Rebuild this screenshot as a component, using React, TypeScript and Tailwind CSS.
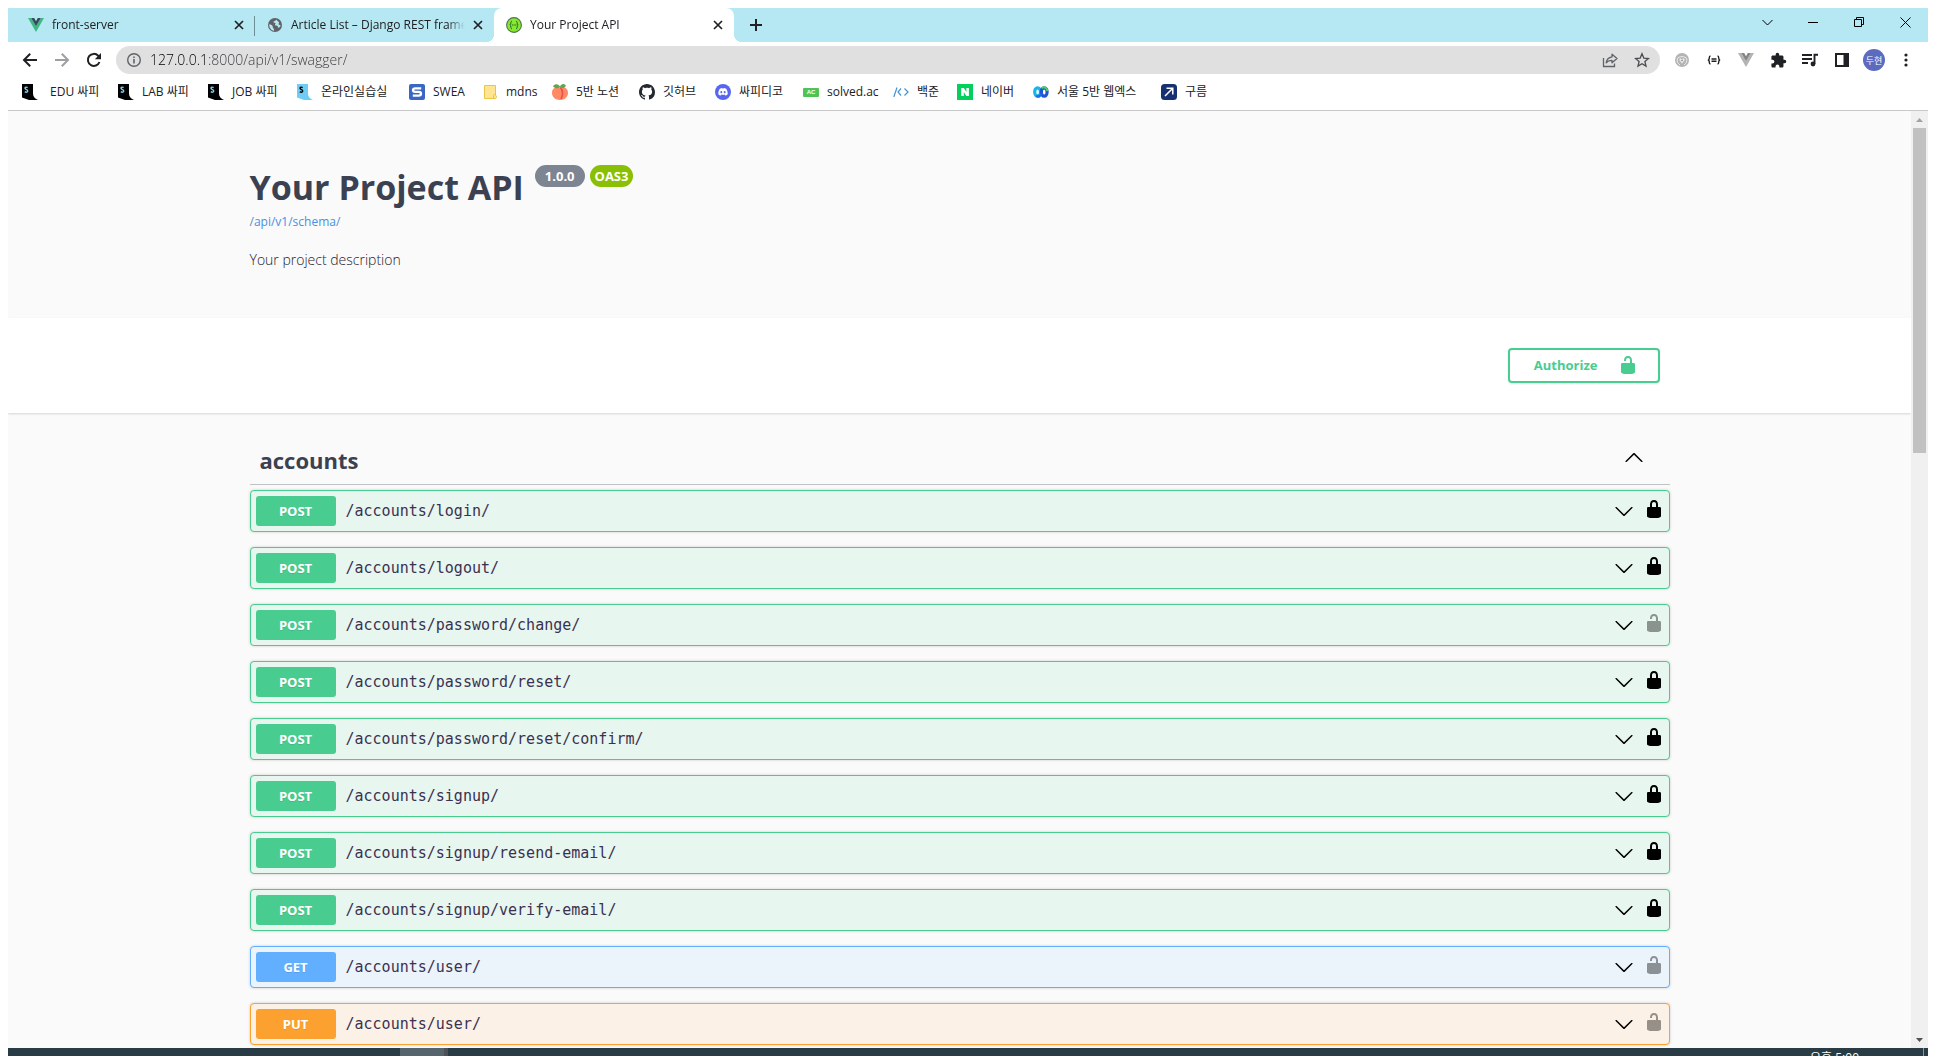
import type { ReactNode } from "react";

const uiFont = "font-['Open_Sans','Noto_Sans_CJK_KR',sans-serif]";

const LOCKED =
  "M15.8 8H14V5.6C14 2.703 12.665 1 10 1 7.334 1 6 2.703 6 5.6V8H4c-.553 0-1 .646-1 1.199V17c0 .549.428 1.139.951 1.307l1.197.387C5.672 18.861 6.55 19 7.1 19h5.8c.549 0 1.428-.139 1.951-.307l1.196-.387c.524-.167.953-.757.953-1.306V9.199C17 8.646 16.352 8 15.8 8zM12 8H8V5.199C8 3.754 8.797 3 10 3c1.203 0 2 .754 2 2.199V8z";
const UNLOCKED =
  "M15.8 8H14V5.6C14 2.703 12.665 1 10 1 7.334 1 6 2.703 6 5.6V6h2v-.801C8 3.754 8.797 3 10 3c1.203 0 2 .754 2 2.199V8H4c-.553 0-1 .646-1 1.199V17c0 .549.428 1.139.951 1.307l1.197.387C5.672 18.861 6.55 19 7.1 19h5.8c.549 0 1.428-.139 1.951-.307l1.196-.387c.524-.167.953-.757.953-1.306V9.199C17 8.646 16.352 8 15.8 8z";

function LockIcon({ locked, className = "" }: { locked: boolean; className?: string }) {
  return (
    <svg viewBox="0 0 20 20" className={`size-5 shrink-0 fill-current ${className}`} aria-hidden="true">
      <path d={locked ? LOCKED : UNLOCKED} />
    </svg>
  );
}

function Chevron({ up = false }: { up?: boolean }) {
  return (
    <svg viewBox="0 0 20 20" className={`size-5 shrink-0 ${up ? "-mt-1 rotate-180" : ""}`} aria-hidden="true">
      <path d="M17.418 6.109c.272-.268.709-.268.979 0s.271.701 0 .969l-7.908 7.83c-.27.268-.707.268-.979 0l-7.908-7.83c-.27-.268-.27-.701 0-.969.271-.268.709-.268.979 0L10 13.25l7.418-7.141z" />
    </svg>
  );
}

function Svg({ children, size = 16, box = 16 }: { children: ReactNode; size?: number; box?: number }) {
  return (
    <svg width={size} height={size} viewBox={`0 0 ${box} ${box}`} className="shrink-0" aria-hidden="true">
      {children}
    </svg>
  );
}

/* ---------- favicons ---------- */

const VueIcon = () => (
  <Svg>
    <path d="M0 1h3.2L8 9.3 12.800 1H16L8 15z" fill="#41b883" />
    <path d="M3.200 1H6.200L8 4.200 9.800 1h3L8 9.300z" fill="#35495e" />
  </Svg>
);

const GlobeIcon = () => (
  <Svg>
    <circle cx="8" cy="8" r="7" fill="#5f6368" />
    <path d="M2.300 7.200c1.600.3 3 1 3.400 2 .3 1-.3 1.300.6 2 .7.500.9 1.200.7 2.500C4 13.300 2 10.500 2.300 7.200zM9.500 2.500c-.4 1.200-1.700 1.200-2.600 1.700-.8.500-.3 1.500.6 1.500 1.100.1 1.300 1 .7 1.600-.6.800 0 1.400 1.200 1.300 1.400 0 1.700 1 1.500 2 1.700.3 2.400-1.200 2.700-2.600-.9.300-1.900-.1-2-1-.1-.8.900-1.200.2-2-.6-.7-1.700-1-2.300-2.500z" fill="#b6e8f3" />
  </Svg>
);

const SwaggerIcon = () => (
  <Svg>
    <circle cx="8" cy="8" r="7.400" fill="#85ea2d" stroke="#4d7350" strokeWidth="1.100" />
    <path d="M6 4.300C4.900 4.300 4.900 4.900 4.900 5.800S4.600 7.700 3.800 8c.8.300 1.100 1.200 1.100 2.200S4.900 11.700 6 11.700M10 4.300c1.100 0 1.100.6 1.100 1.500s.3 1.900 1.100 2.200c-.8.300-1.100 1.200-1.100 2.200s0 1.500-1.100 1.500" fill="none" stroke="#2c5a3c" strokeWidth="1" />
    <path d="M5.800 8h4.800" stroke="#2c5a3c" strokeWidth="1.200" strokeDasharray="1.200 .5" />
  </Svg>
);

function SsafyIcon({ fill, ink }: { fill: string; ink: string }) {
  return (
    <Svg>
      <path d="M0 0h11v9.500c0 3 1.500 5 5 6.500H7L0 13.500z" fill={fill} />
      <path d="M5.600 3.600C4.500 2.800 3 3.100 3 4.300c0 1.600 2.700 1 2.700 2.700 0 1.300-1.700 1.500-2.900.7" fill="none" stroke={ink} strokeWidth="1.400" />
    </Svg>
  );
}

const SweaIcon = () => (
  <Svg>
    <rect width="16" height="16" rx="2" fill="#3a66c4" />
    <path d="M12.200 4.300H6.300C4.700 4.300 4 5 4 6.100s.7 1.800 2.100 1.800h3.800c1.400 0 2.100.7 2.100 1.900s-.7 1.900-2.300 1.900H3.800" fill="none" stroke="#fff" strokeWidth="2.300" />
  </Svg>
);

const FolderIcon = () => (
  <Svg>
    <path d="M2.500 1.500h11v9.500a2 2 0 0 1 0 3.500h-11z" fill="#ffe591" stroke="#e8c547" />
    <path d="M11.500 14v-2.500a1 1 0 0 1 2 0" fill="none" stroke="#e8c547" />
  </Svg>
);

const PeachIcon = () => (
  <Svg>
    <path d="M8 3.500C3.500 2 0 5 0 9c0 4.200 3.600 7 8 7s8-2.800 8-7c0-4-3.500-7-8-5.500z" fill="#ff8a65" />
    <path d="M8.300 3.500c2.600 2.600 3 7.500.7 11.500" fill="none" stroke="#e8504a" strokeWidth="1.600" />
    <path d="M1 2.200C3.200-.5 6-.4 8 2.600 9.200-.2 12-.8 14 1.700 12.300 4.800 9.500 4.500 8 3.100 6 4.900 3 4.700 1 2.200z" fill="#5fa552" />
  </Svg>
);

const GithubIcon = () => (
  <Svg>
    <path fill="#24292f" d="M8 0C3.580 0 0 3.580 0 8c0 3.540 2.290 6.530 5.470 7.590.4.070.55-.17.55-.38 0-.19-.01-.82-.01-1.490-2.010.37-2.530-.49-2.690-.94-.09-.23-.48-.94-.82-1.130-.28-.15-.68-.52-.01-.53.63-.01 1.080.58 1.230.82.72 1.210 1.870.87 2.330.66.07-.52.28-.87.51-1.070-1.780-.2-3.640-.89-3.640-3.950 0-.87.31-1.590.82-2.150-.08-.2-.36-1.020.08-2.120 0 0 .67-.21 2.200.82.64-.18 1.320-.27 2-.27s1.360.09 2 .27c1.530-1.040 2.200-.82 2.200-.82.44 1.100.16 1.920.08 2.120.51.56.82 1.270.82 2.150 0 3.070-1.870 3.750-3.650 3.950.29.25.54.73.54 1.480 0 1.070-.01 1.930-.01 2.200 0 .21.15.46.55.38A8.010 8.010 0 0 0 16 8c0-4.420-3.580-8-8-8z" />
  </Svg>
);

const DiscordIcon = () => (
  <Svg>
    <circle cx="8" cy="8" r="8" fill="#5865f2" />
    <path d="M4.800 4.700c1-.6 1.900-.8 2.300-.8l.3.500h1.200l.3-.5c.4 0 1.300.2 2.300.8 1 1.500 1.700 3.500 1.500 5.500-.8.800-1.700 1.200-2.500 1.300l-.6-1c-1 .3-2.200.3-3.200 0l-.6 1c-.8-.1-1.700-.5-2.500-1.300-.2-2 .5-4 1.500-5.500z" fill="#fff" />
    <ellipse cx="6.300" cy="8.200" rx="1" ry="1.100" fill="#5865f2" />
    <ellipse cx="9.700" cy="8.200" rx="1" ry="1.100" fill="#5865f2" />
  </Svg>
);

const SolvedIcon = () => (
  <span className="flex h-[9px] w-4 shrink-0 items-center justify-center rounded-[1px] bg-[#4fc455] font-['Liberation_Sans',sans-serif] text-[6px] leading-none font-bold text-white">
    AC
  </span>
);

const BaekjoonIcon = () => (
  <Svg>
    <path d="M4 3.500.8 13M8 4.500 5 8l3 3.500M11.500 4.500 15 8l-3.500 3.500" fill="none" stroke="#4593d1" strokeWidth="1.200" />
  </Svg>
);

const NaverIcon = () => (
  <Svg>
    <rect width="16" height="16" fill="#03cf5d" />
    <path d="M4.200 12V4h2.700l2.500 3.900V4h2.500v8H9.300L6.800 8.100V12z" fill="#fff" />
  </Svg>
);

const WebexIcon = () => (
  <Svg>
    <ellipse cx="4.600" cy="8" rx="2.900" ry="4.200" fill="none" stroke="#17b5e8" strokeWidth="3.200" />
    <ellipse cx="11.200" cy="8" rx="2.900" ry="4.200" fill="none" stroke="#1f55d6" strokeWidth="3.200" />
    <path d="M8.500 4.300c1.300-1.200 3-1.300 4.300-.2.900.8 1.500 1.800 1.600 3" fill="none" stroke="#4fd05a" strokeWidth="2" />
    <path d="M3.400 11.600c1.900 1.600 3.900 1 4.700-2.100" fill="none" stroke="#1c6fe8" strokeWidth="2.600" />
  </Svg>
);

const GoormIcon = () => (
  <Svg>
    <rect width="16" height="16" rx="3.500" fill="#16316f" />
    <path d="M4 12l7.500-7.500M5.500 4.200h6.300v6.300" fill="none" stroke="#fff" strokeWidth="1.500" />
  </Svg>
);

/* ---------- browser chrome ---------- */

const Cross = () => (
  <Svg size={10} box={10}>
    <path d="M1 1l8 8M9 1L1 9" stroke="#202124" strokeWidth="1.700" fill="none" />
  </Svg>
);

function Tab({ icon, title, active = false, divider = false }: { icon: ReactNode; title: string; active?: boolean; divider?: boolean }) {
  return (
    <div
      className={`relative flex min-w-0 items-center gap-2 pr-[11px] pl-3 ${
        active
          ? "w-60 rounded-t-lg bg-white before:absolute before:bottom-0 before:-left-2 before:size-2 before:bg-[radial-gradient(circle_at_0_0,transparent_8px,white_8px)] after:absolute after:-right-2 after:bottom-0 after:size-2 after:bg-[radial-gradient(circle_at_100%_0,transparent_8px,white_8px)]"
          : "w-[239px]"
      }`}
    >
      {icon}
      <button className="min-w-0 flex-1 overflow-hidden mask-r-from-90% text-left text-xs whitespace-nowrap">{title}</button>
      <button aria-label={`Close ${title}`}>
        <Cross />
      </button>
      {divider && <span className="absolute top-2 right-0 h-5 w-px bg-[#6f8d94]" />}
    </div>
  );
}

function WindowButton({ label, children }: { label: string; children: ReactNode }) {
  return (
    <button aria-label={label} className="flex h-7 w-[46px] items-center justify-center">
      <svg width="11" height="11" viewBox="0 0 11 11" fill="none" stroke="#000" aria-hidden="true">
        {children}
      </svg>
    </button>
  );
}

function TabStrip() {
  return (
    <div className="flex h-[34px] shrink-0 bg-[#b5e8f3]">
      <div className="flex min-w-0 flex-1 pl-2">
        <Tab icon={<VueIcon />} title="front-server" divider />
        <Tab icon={<GlobeIcon />} title="Article List – Django REST framework" />
        <Tab icon={<SwaggerIcon />} title="Your Project API" active />
        <button aria-label="New tab" className="ml-4 self-center">
          <Svg size={12} box={12}>
            <path d="M6 0v12M0 6h12" stroke="#202124" strokeWidth="2" />
          </Svg>
        </button>
      </div>
      <div className="flex">
        <WindowButton label="Search tabs">
          <path d="M.5 3l5 5 5-5" />
        </WindowButton>
        <WindowButton label="Minimize">
          <path d="M0 5.500h10" />
        </WindowButton>
        <WindowButton label="Restore">
          <path d="M.5 2.500h7v7h-7zM2.500 2.500v-2h7v7h-2" />
        </WindowButton>
        <WindowButton label="Close window">
          <path d="M.5.5l10 10M10.500.5l-10 10" />
        </WindowButton>
      </div>
    </div>
  );
}

function ToolButton({ label, children }: { label: string; children: ReactNode }) {
  return (
    <button aria-label={label} className="flex h-7 w-8 shrink-0 items-center justify-center">
      {children}
    </button>
  );
}

function Toolbar() {
  return (
    <div className="flex h-9 shrink-0 items-center px-1.5 text-[#202124]">
      <ToolButton label="Back">
        <Svg>
          <path d="M15 8H2.500M8.200 1.700 2 8l6.200 6.300" fill="none" stroke="#202124" strokeWidth="2" />
        </Svg>
      </ToolButton>
      <ToolButton label="Forward">
        <Svg>
          <path d="M1 8h12.500M7.800 1.700 14 8l-6.200 6.300" fill="none" stroke="#9d9fa2" strokeWidth="2" />
        </Svg>
      </ToolButton>
      <ToolButton label="Reload">
        <Svg>
          <path d="M13.500 10A6 6 0 1 1 12.200 3.700L13.500 5" fill="none" stroke="#202124" strokeWidth="2" />
          <path d="M15 1v6.200H8.800z" fill="#202124" />
        </Svg>
      </ToolButton>
      <div className="mx-1.5 flex h-7 min-w-0 flex-1 items-center rounded-full bg-[#e0e0e0] pr-0.5 pl-2.5">
        <Svg>
          <circle cx="8" cy="8" r="6.300" fill="none" stroke="#5f6368" strokeWidth="1.400" />
          <path d="M8 7v4.500M8 4.400v1.600" stroke="#5f6368" strokeWidth="1.600" />
        </Svg>
        <input
          aria-label="Address"
          defaultValue="127.0.0.1:8000/api/v1/swagger/"
          className="ml-2 min-w-0 flex-1 bg-[linear-gradient(to_right,#000_56px,#35383c_56px)] bg-clip-text text-sm font-light text-transparent outline-none"
        />
        <ToolButton label="Share">
          <Svg>
            <path d="M1.500 6v8.500h11v-3" fill="none" stroke="#5f6368" strokeWidth="1.300" />
            <path d="M10 2.200 15 6.500l-5 4.300V8.300c-2.700 0-4.500.8-5.800 2.600.4-3 2.200-5.400 5.800-6z" fill="none" stroke="#5f6368" strokeWidth="1.300" strokeLinejoin="round" />
          </Svg>
        </ToolButton>
        <ToolButton label="Bookmark">
          <Svg>
            <path d="M8 1.800l1.800 4.300 4.700.4-3.600 3 1.100 4.600L8 11.700l-4 2.400 1.100-4.600-3.600-3 4.700-.4z" fill="none" stroke="#4a4c50" strokeWidth="1.300" />
          </Svg>
        </ToolButton>
      </div>
      <ToolButton label="Extension">
        <Svg>
          <circle cx="8" cy="8" r="7" fill="#b4b4b4" />
          <path d="M6 13c-2.300-1.600-3.200-3.700-2.700-6C4.200 3.800 11.800 3.800 12.700 7c.5 2.300-.4 4.400-2.700 6" fill="none" stroke="#ededed" strokeWidth="1" />
          <path d="M8 11.500 5.500 8.300c-.6-2 1.700-2.300 2.500-1 .8-1.300 3.100-1 2.500 1z" fill="#ededed" />
          <circle cx="8" cy="8.300" r=".9" fill="#8c8c8c" />
        </Svg>
      </ToolButton>
      <ToolButton label="JSON formatter">
        <Svg>
          <path d="M4.500 4C3 4 3.300 5.500 3.200 6.800 3.100 7.600 2.700 8 1.800 8c.9 0 1.300.4 1.400 1.200.1 1.300-.2 2.800 1.300 2.800M11.500 4c1.500 0 1.200 1.500 1.300 2.800.1.800.5 1.200 1.400 1.200-.9 0-1.300.4-1.400 1.200-.1 1.300.2 2.800-1.300 2.800M5.500 7h5M5.500 9.300h5" fill="none" stroke="#202124" strokeWidth="1.400" />
        </Svg>
      </ToolButton>
      <ToolButton label="Vue devtools">
        <Svg>
          <path d="M0 1h3.200L8 9.300 12.800 1H16L8 15z" fill="#b3b3b3" />
          <path d="M3.200 1h3L8 4.200 9.800 1h3L8 9.300z" fill="#868686" />
        </Svg>
      </ToolButton>
      <ToolButton label="Extensions">
        <Svg size={17} box={24}>
          <path d="M20.500 11H19V7c0-1.100-.9-2-2-2h-4V3.500a2.500 2.500 0 0 0-5 0V5H4c-1.100 0-2 .9-2 2v3.800h1.500a2.700 2.700 0 0 1 0 5.400H2V20c0 1.100.9 2 2 2h3.800v-1.500a2.700 2.700 0 0 1 5.400 0V22H17c1.100 0 2-.9 2-2v-4h1.500a2.500 2.500 0 0 0 0-5z" fill="#202124" />
        </Svg>
      </ToolButton>
      <ToolButton label="Media">
        <Svg>
          <path d="M0 3h10M0 7h10M0 11h6" stroke="#202124" strokeWidth="1.900" />
          <path d="M12.500 12V2.800H16" fill="none" stroke="#202124" strokeWidth="1.900" />
          <circle cx="11" cy="12" r="2.400" fill="#202124" />
        </Svg>
      </ToolButton>
      <ToolButton label="Side panel">
        <Svg>
          <path d="M1 1h14v14H1zM3 3v10h6.500V3z" fill="#202124" fillRule="evenodd" />
        </Svg>
      </ToolButton>
      <ToolButton label="Profile">
        <span className="flex size-[22px] items-center justify-center rounded-full bg-[#5c6bc0] text-[9px] leading-none text-white">두현</span>
      </ToolButton>
      <ToolButton label="Menu">
        <Svg>
          <circle cx="8" cy="3" r="1.600" fill="#202124" />
          <circle cx="8" cy="8" r="1.600" fill="#202124" />
          <circle cx="8" cy="13" r="1.600" fill="#202124" />
        </Svg>
      </ToolButton>
    </div>
  );
}

const bookmarks: { label: string; icon: ReactNode; size: string }[] = [
  { label: "EDU 싸피", icon: <SsafyIcon fill="#000" ink="#7fd4f5" />, size: "w-24 gap-3" },
  { label: "LAB 싸피", icon: <SsafyIcon fill="#000" ink="#7fd4f5" />, size: "w-[90px] gap-2" },
  { label: "JOB 싸피", icon: <SsafyIcon fill="#000" ink="#7fd4f5" />, size: "w-[89px] gap-2" },
  { label: "온라인실습실", icon: <SsafyIcon fill="#6fcdf4" ink="#000" />, size: "w-28 gap-2" },
  { label: "SWEA", icon: <SweaIcon />, size: "w-[73px] gap-2" },
  { label: "mdns", icon: <FolderIcon />, size: "w-[70px] gap-2" },
  { label: "5반 노션", icon: <PeachIcon />, size: "w-[87px] gap-2" },
  { label: "깃허브", icon: <GithubIcon />, size: "w-[76px] gap-2" },
  { label: "싸피디코", icon: <DiscordIcon />, size: "w-[88px] gap-2" },
  { label: "solved.ac", icon: <SolvedIcon />, size: "w-[90px] gap-2" },
  { label: "백준", icon: <BaekjoonIcon />, size: "w-16 gap-2" },
  { label: "네이버", icon: <NaverIcon />, size: "w-[76px] gap-2" },
  { label: "서울 5반 웹엑스", icon: <WebexIcon />, size: "w-32 gap-2" },
  { label: "구름", icon: <GoormIcon />, size: "w-16 gap-2" },
];

function BookmarkBar() {
  return (
    <nav className="flex h-[33px] shrink-0 items-start border-b border-[#c8c8c8] pt-1.5 pl-3.5">
      {bookmarks.map((b) => (
        <a key={b.label} href="#" className={`flex h-4 shrink-0 items-center text-xs whitespace-nowrap text-[#202124] ${b.size}`}>
          {b.icon}
          {b.label}
        </a>
      ))}
    </nav>
  );
}

/* ---------- API page ---------- */

const methods = {
  POST: { row: "border-[#49cc90] bg-[#e7f6ef]", badge: "bg-[#49cc90]" },
  GET: { row: "border-[#61affe] bg-[#ebf3fb]", badge: "bg-[#61affe]" },
  PUT: { row: "border-[#fca130] bg-[#fbf1e6]", badge: "bg-[#fca130]" },
};

const operations: { method: keyof typeof methods; path: string; locked: boolean }[] = [
  { method: "POST", path: "/accounts/login/", locked: true },
  { method: "POST", path: "/accounts/logout/", locked: true },
  { method: "POST", path: "/accounts/password/change/", locked: false },
  { method: "POST", path: "/accounts/password/reset/", locked: true },
  { method: "POST", path: "/accounts/password/reset/confirm/", locked: true },
  { method: "POST", path: "/accounts/signup/", locked: true },
  { method: "POST", path: "/accounts/signup/resend-email/", locked: true },
  { method: "POST", path: "/accounts/signup/verify-email/", locked: true },
  { method: "GET", path: "/accounts/user/", locked: false },
  { method: "PUT", path: "/accounts/user/", locked: false },
];

function Operation({ method, path, locked }: (typeof operations)[number]) {
  const style = methods[method];
  return (
    <li className={`flex items-center rounded border p-[5px] shadow-[0_0_3px_rgba(0,0,0,0.19)] ${style.row}`}>
      <button className="flex min-w-0 flex-1 items-center text-left">
        <span className={`w-20 rounded-[3px] py-[5px] text-center text-[13px] leading-5 font-bold text-white text-shadow-[0_1px_0_rgba(0,0,0,0.1)] ${style.badge}`}>
          {method}
        </span>
        <span className="flex-1 px-2.5 font-['DejaVu_Sans_Mono',monospace] text-[15px] leading-5 text-[#3b3151]">{path}</span>
        <Chevron />
      </button>
      <button aria-label={locked ? "Authorized" : "Not authorized"} className="-mt-1 pl-2.5 text-black">
        <LockIcon locked={locked} className={locked ? "" : "opacity-40"} />
      </button>
    </li>
  );
}

function ApiPage() {
  return (
    <main className="min-w-0 flex-1 overflow-hidden bg-[#fafafa] text-[#3b4151]">
      <header className="mx-auto h-[207px] max-w-[1460px] px-5 pt-[51px]">
        <div className="flex items-start gap-[5px]">
          <h1 className="pr-1.5 text-[34px] leading-[50px] font-bold">Your Project API</h1>
          <span className="mt-[3px] rounded-full bg-[#7d8492] px-2.5 text-[13px] leading-[22px] font-bold text-white">1.0.0</span>
          <span className="mt-[3px] rounded-full bg-[#89bf04] px-[5px] text-[13px] leading-[22px] font-bold text-white">OAS3</span>
        </div>
        <a href="#" className="block text-xs leading-5 text-[#4990e2]">
          /api/v1/schema/
        </a>
        <p className="mt-[18px] text-sm leading-5 font-light text-[#1c202c]">Your project description</p>
      </header>

      <div className="bg-white shadow-[0_1px_2px_rgba(0,0,0,0.15)]">
        <div className="mx-auto flex max-w-[1460px] justify-end p-[30px]">
          <button className="flex h-[35px] items-center justify-between rounded border-2 border-[#49cc90] pr-5 pl-6 text-[13px] font-bold text-[#49cc90] shadow-[0_1px_2px_rgba(0,0,0,0.1)]">
            <span className="pr-5">Authorize</span>
            <LockIcon locked={false} className="-mt-0.5" />
          </button>
        </div>
      </div>

      <section className="mx-auto max-w-[1460px] px-5 pt-5">
        <button className="flex w-full items-center border-b border-[#3b4151]/30 pt-3 pr-[26px] pb-[9px] pl-2.5 text-left">
          <h2 className="flex-1 text-[22px] leading-[30px] font-bold">accounts</h2>
          <Chevron up />
        </button>
        <ul className="mt-[5px] flex flex-col gap-[15px]">
          {operations.map((op) => (
            <Operation key={op.method + op.path} {...op} />
          ))}
        </ul>
      </section>
    </main>
  );
}

function Scrollbar() {
  return (
    <div className="flex w-[17px] shrink-0 flex-col items-center bg-[#f0f0f0]">
      <div className="flex h-[17px] items-center">
        <svg width="7" height="4" viewBox="0 0 7 4" aria-hidden="true">
          <path d="M0 4L3.500 0 7 4z" fill="#a3a3a3" />
        </svg>
      </div>
      <div className="flex w-[13px] flex-1 flex-col">
        <div className="h-[36%] bg-[#c1c1c1]" />
      </div>
      <div className="flex h-[17px] items-center">
        <svg width="7" height="4" viewBox="0 0 7 4" aria-hidden="true">
          <path d="M0 0L3.500 4 7 0z" fill="#505050" />
        </svg>
      </div>
    </div>
  );
}

function Taskbar() {
  return (
    <footer className="flex h-2 shrink-0 justify-between overflow-hidden bg-[#293b44]">
      <div className="ml-[392px] w-12 border-r-4 border-[#4a5157] bg-[#56656d]" />
      <div className="flex gap-16 pr-1">
        <span className="pt-0.5 text-xs leading-4 text-white">오후 5:00</span>
        <span className="w-px bg-[#8a979d]" />
      </div>
    </footer>
  );
}

export default function App() {
  return (
    <div className={`flex h-screen flex-col bg-white px-2 pt-2 text-[#202124] ${uiFont}`}>
      <TabStrip />
      <Toolbar />
      <BookmarkBar />
      <div className="flex min-h-0 flex-1">
        <ApiPage />
        <Scrollbar />
      </div>
      <Taskbar />
    </div>
  );
}
